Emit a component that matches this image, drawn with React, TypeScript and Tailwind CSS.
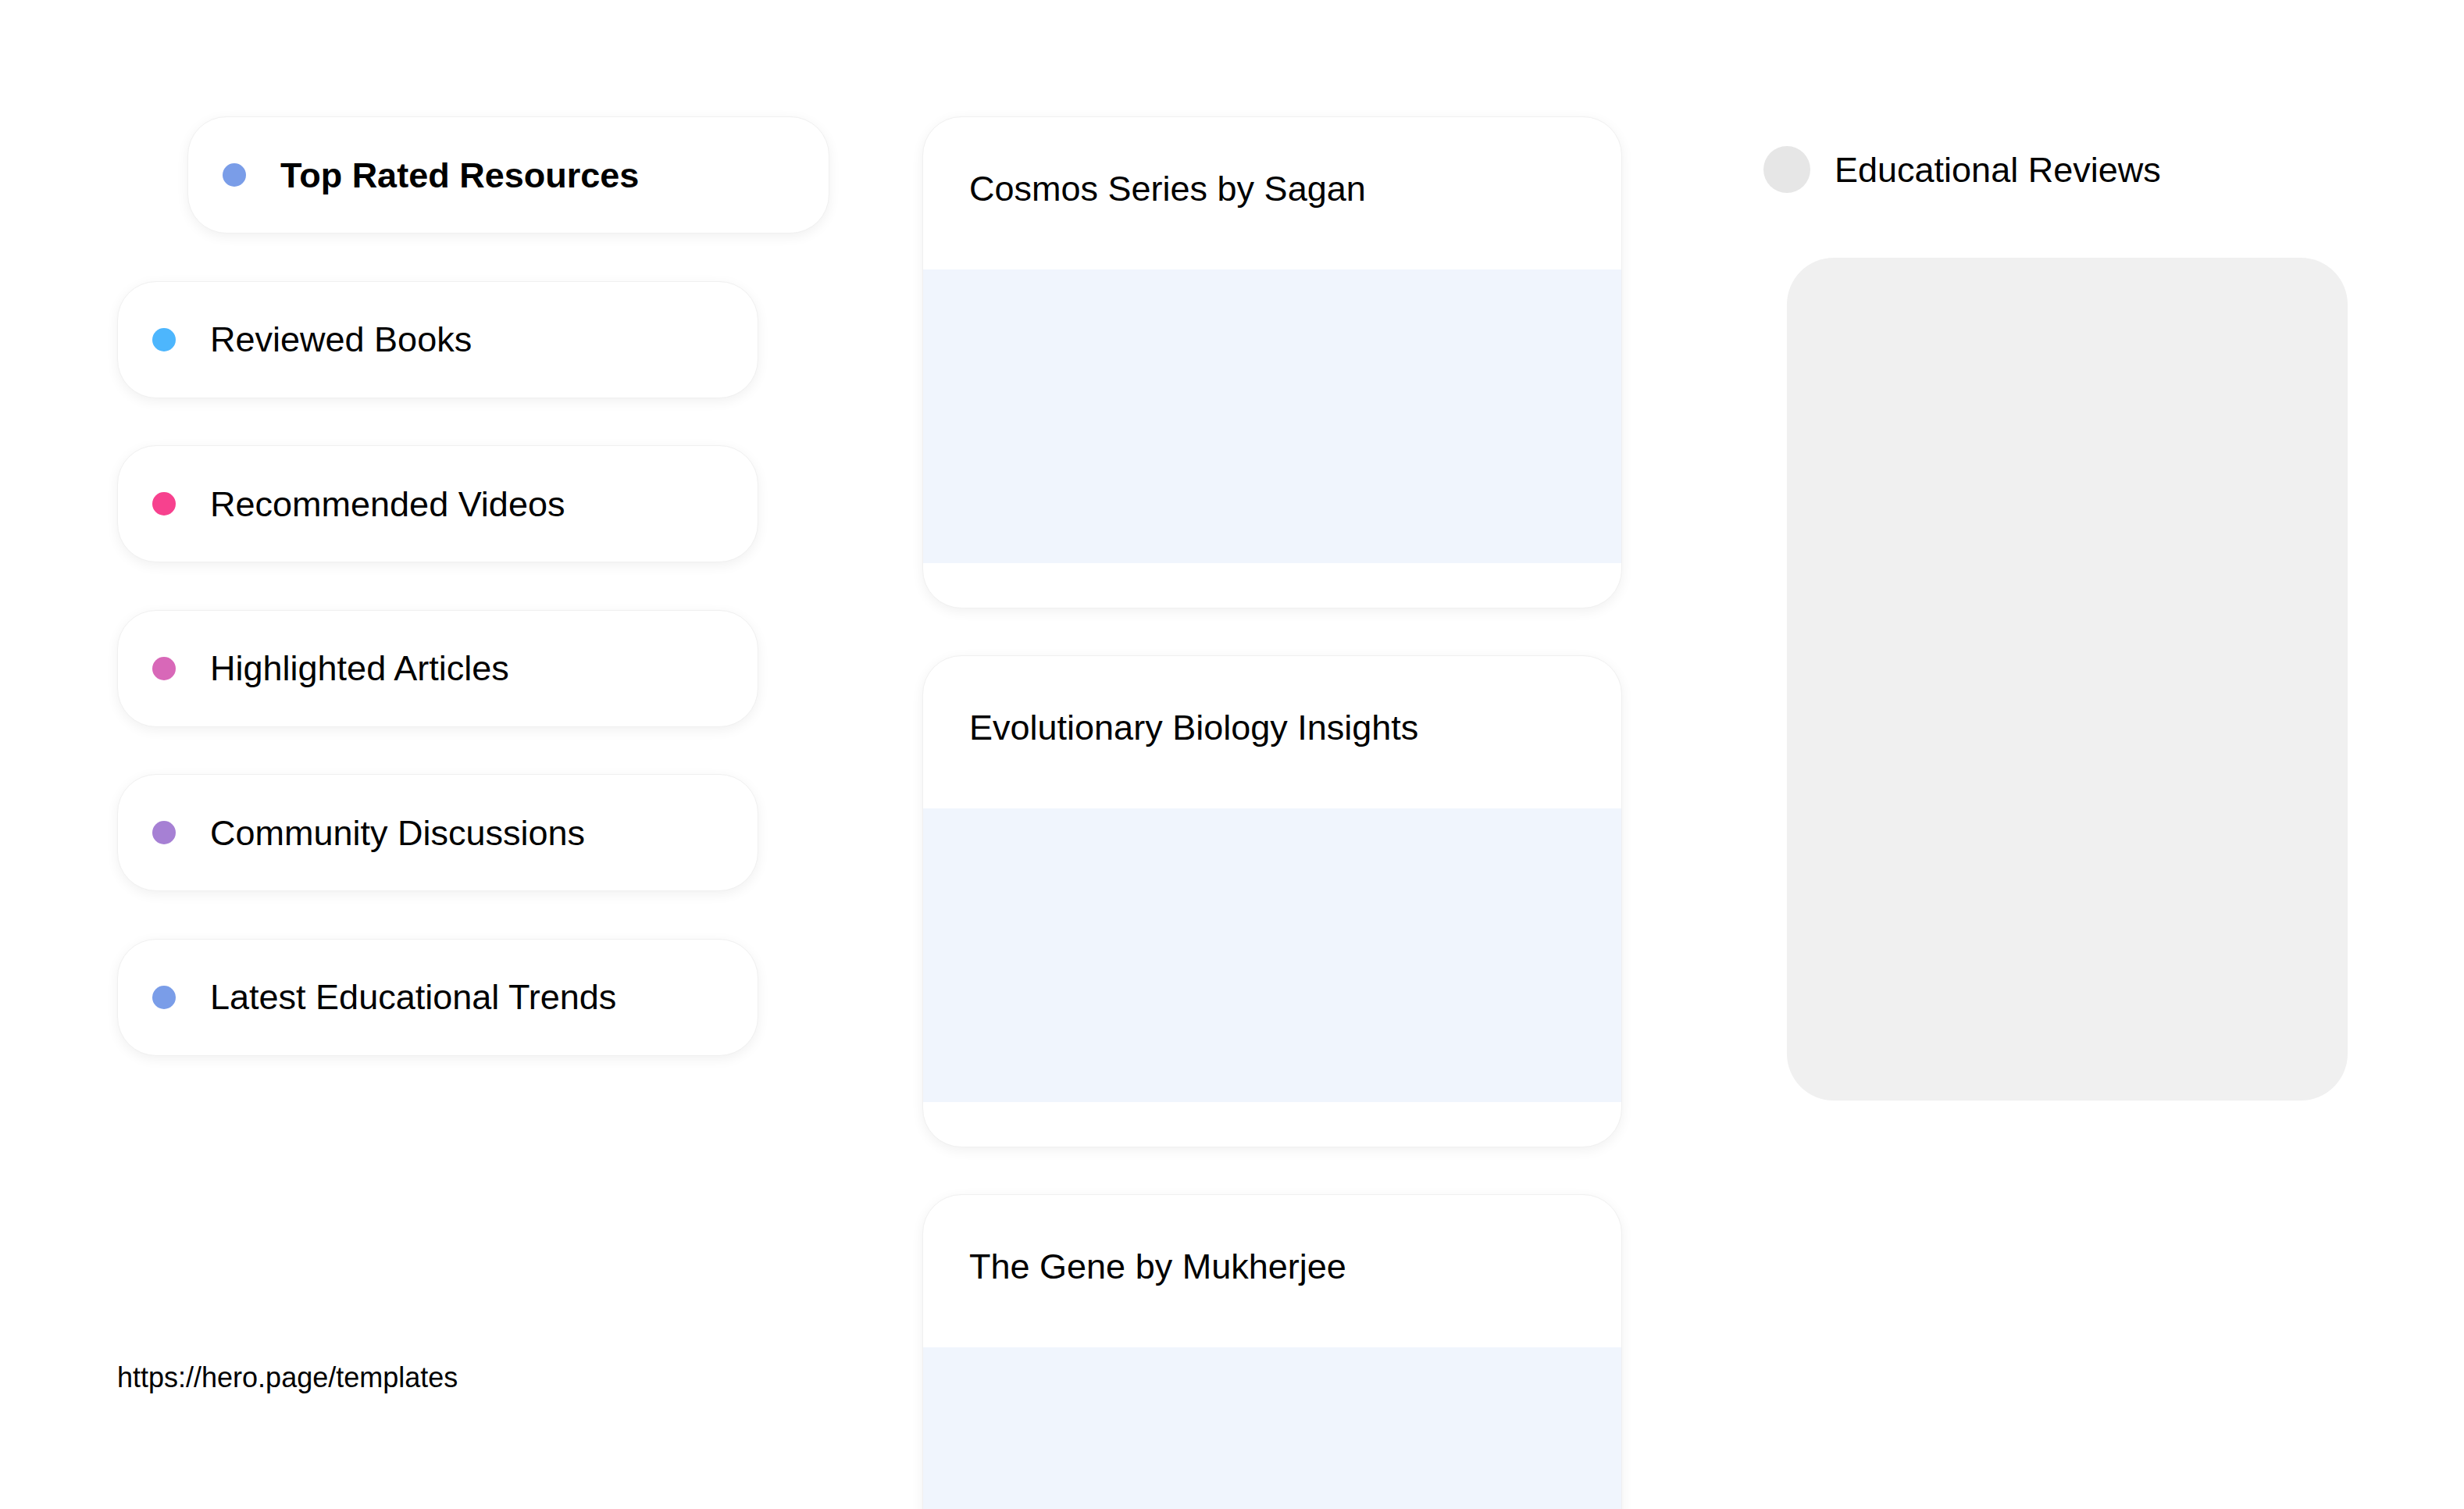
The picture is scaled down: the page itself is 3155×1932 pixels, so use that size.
import React from 'react';

interface NavItem {
  label: string;
  dot: string;
}

const navItems: NavItem[] = [
  { label: 'Reviewed Books', dot: 'bg-[#4db6fd]' },
  { label: 'Recommended Videos', dot: 'bg-[#f7418e]' },
  { label: 'Highlighted Articles', dot: 'bg-[#d868b8]' },
  { label: 'Community Discussions', dot: 'bg-[#a680d4]' },
  { label: 'Latest Educational Trends', dot: 'bg-[#7a9de8]' },
];

const cards = ['Cosmos Series by Sagan', 'Evolutionary Biology Insights', 'The Gene by Mukherjee'];

const Pill: React.FC<{ label: string; dot: string; bold?: boolean; className?: string }> = ({
  label,
  dot,
  bold,
  className = '',
}) => (
  <div
    className={`flex h-[150px] items-center rounded-[50px] border border-[#f0f0f0] bg-white pl-[44px] shadow-[0_4px_16px_rgba(0,0,0,0.06)] ${className}`}
  >
    <span className={`h-[30px] w-[30px] shrink-0 rounded-full ${dot}`} />
    <span className={`ml-[44px] text-[45px] leading-none ${bold ? 'font-bold' : ''}`}>{label}</span>
  </div>
);

export default function App() {
  return (
    <div className="h-screen w-full overflow-hidden bg-white font-['Liberation_Sans',Arial,sans-serif] text-black">
      <div className="flex pl-[150px] pt-[149px]">
        {/* left nav */}
        <div className="flex w-[916px] shrink-0 flex-col gap-[60.5px]">
          <Pill label="Top Rated Resources" dot="bg-[#7a9de8]" bold className="ml-[90px] w-[822px]" />
          {navItems.map((item) => (
            <Pill key={item.label} label={item.label} dot={item.dot} className="w-[821px]" />
          ))}
          <p className="mt-[331px] text-[36px] leading-[1.15]">https://hero.page/templates</p>
        </div>

        {/* cards */}
        <div className="ml-[115px] flex w-[896px] shrink-0 flex-col gap-[60px]">
          {cards.map((title) => (
            <div
              key={title}
              className="h-[630px] shrink-0 overflow-hidden rounded-[50px] border border-[#f0f0f0] bg-white shadow-[0_4px_16px_rgba(0,0,0,0.06)]"
            >
              <div className="h-[195px] pl-[59px] pt-[58px]">
                <h3 className="text-[45px] leading-[1.5]">{title}</h3>
              </div>
              <div className="h-[376px] bg-[#f0f5fd]" />
            </div>
          ))}
        </div>

        {/* reviews */}
        <div className="ml-[181px] flex w-[750px] shrink-0 flex-col">
          <div className="mt-[38px] flex h-[60px] items-center">
            <span className="h-[60px] w-[60px] shrink-0 rounded-full bg-[#e6e6e6]" />
            <span className="ml-[31px] text-[45px] leading-none">Educational Reviews</span>
          </div>
          <div className="ml-[30px] mt-[83px] h-[1079px] w-[718px] rounded-[60px] bg-[#f0f0f0]" />
        </div>
      </div>
    </div>
  );
}
